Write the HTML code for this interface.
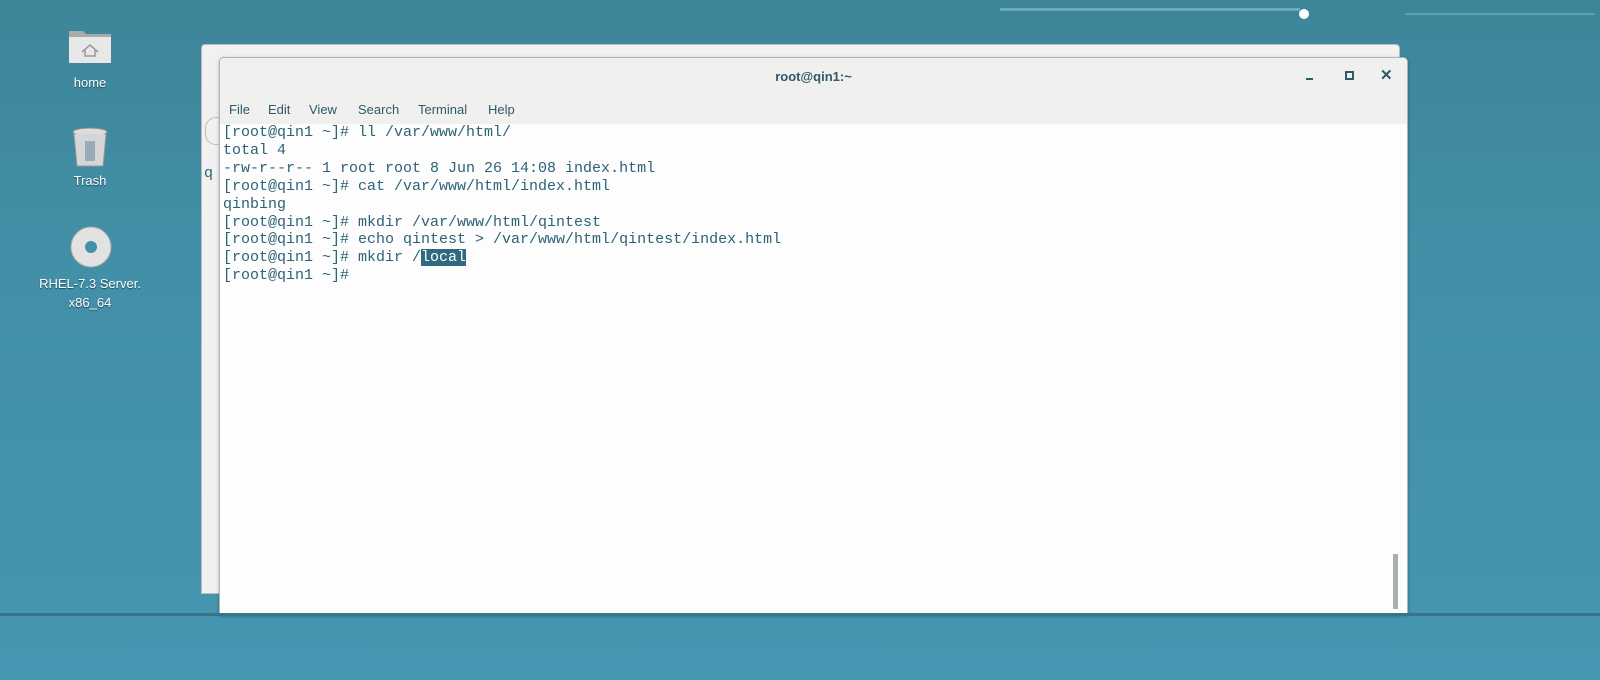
<!DOCTYPE html>
<html><head><style>
body{margin:0;width:1600px;height:680px;overflow:hidden;background:linear-gradient(180deg,#3d8599 0%,#4290a8 40%,#4596b0 100%);font-family:"Liberation Sans",sans-serif;position:relative}
.ic{position:absolute;color:#fff;font-size:13px;text-align:center;width:110px;text-shadow:0 1px 1px #245}
.back{position:absolute;left:201px;top:44px;width:1197px;height:548px;background:#f1f1f1;border:1px solid #b8bcbe;border-radius:4px 4px 0 0}
.win{position:absolute;left:219px;top:57px;width:1187px;height:556px;background:#fdfdfd;border:1px solid #b0b4b6;border-radius:5px 5px 0 0;box-shadow:0 1px 3px rgba(0,0,0,.3)}
.hdr{position:absolute;left:0;top:0;right:0;height:66px;background:#f0f0ef;border-radius:5px 5px 0 0}
.title{position:absolute;left:0;right:0;top:11px;text-align:center;font-size:13px;font-weight:bold;color:#2e5a69}
.menu{position:absolute;top:44px;font-size:13px;color:#2e5a69}
pre{position:absolute;left:3px;top:66px;margin:0;font-family:"Liberation Mono",monospace;font-size:15px;line-height:17.9px;color:#2c6276}
.sel{background:#2f6a80;color:#fff}
</style></head><body>
<div style="position:absolute;left:1000px;top:8px;width:300px;height:3px;background:rgba(180,220,230,.4)"></div>
<div style="position:absolute;left:1299px;top:9px;width:10px;height:10px;border-radius:50%;background:#fff"></div>
<div style="position:absolute;left:1405px;top:13px;width:190px;height:2px;background:rgba(120,190,210,.5)"></div>

<svg style="position:absolute;left:68px;top:27px" width="44" height="37"><path d="M1 4h14l3 3h25v29H1z" fill="#aaa"/><rect x="1" y="10" width="42" height="26" fill="#e8e8e8"/><path d="M14 25l8-7 8 7M17 23v6h10v-6" stroke="#999" fill="none" stroke-width="1.5"/></svg>
<div class="ic" style="left:35px;top:75px">home</div>
<svg style="position:absolute;left:71px;top:127px" width="38" height="42"><ellipse cx="19" cy="5" rx="17" ry="4" fill="#ddd" stroke="#888"/><path d="M3 7l3 32h26l3-32" fill="#d6d6d6" stroke="#999"/><rect x="14" y="14" width="10" height="20" fill="#9ab"/></svg>
<div class="ic" style="left:35px;top:173px">Trash</div>
<svg style="position:absolute;left:69px;top:225px" width="44" height="44"><circle cx="22" cy="22" r="20" fill="#e2e2e2" stroke="#aaa"/><circle cx="22" cy="22" r="6" fill="#4590a8"/></svg>
<div class="ic" style="left:20px;top:276px;width:140px">RHEL-7.3 Server.<br><span style="line-height:24px">x86_64</span></div>

<div class="back"><div style="position:absolute;left:2px;top:120px;font-family:'Liberation Mono',monospace;font-size:15px;color:#2c6276">q</div><div style="position:absolute;left:3px;top:72px;width:20px;height:26px;border:1px solid #bbb;border-radius:12px"></div></div>
<div class="win">
<div class="hdr">
<div class="title">root@qin1:~</div>
<div style="position:absolute;left:1086px;top:20px;width:7px;height:2px;background:#2e5a69"></div>
<div style="position:absolute;left:1125px;top:13px;width:5px;height:5px;border:2px solid #2e5a69"></div>
<div style="position:absolute;left:1160px;top:8px;font-size:15px;font-weight:bold;color:#2e5a69">✕</div>
<span class="menu" style="left:9px">File</span><span class="menu" style="left:48px">Edit</span><span class="menu" style="left:89px">View</span><span class="menu" style="left:138px">Search</span><span class="menu" style="left:198px">Terminal</span><span class="menu" style="left:268px">Help</span>
</div>
<pre>[root@qin1 ~]# ll /var/www/html/
total 4
-rw-r--r-- 1 root root 8 Jun 26 14:08 index.html
[root@qin1 ~]# cat /var/www/html/index.html
qinbing
[root@qin1 ~]# mkdir /var/www/html/qintest
[root@qin1 ~]# echo qintest &gt; /var/www/html/qintest/index.html
[root@qin1 ~]# mkdir /<span class="sel">local</span>
[root@qin1 ~]#</pre>
<div style="position:absolute;left:1173px;top:496px;width:5px;height:55px;background:#a9aeb1"></div>
</div>
<div style="position:absolute;left:0;top:613px;width:1600px;height:3px;background:#3a7488"></div>
</body></html>
